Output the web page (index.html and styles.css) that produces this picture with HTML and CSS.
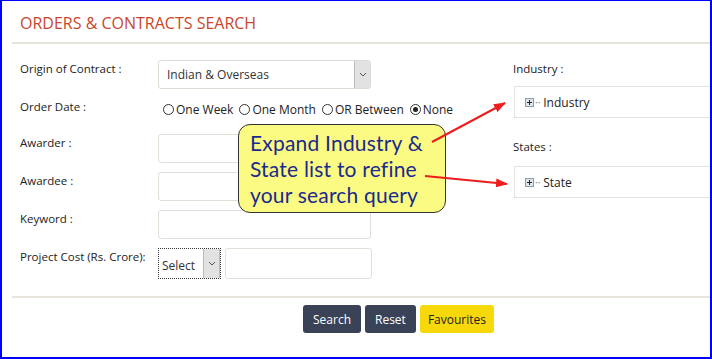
FILE: index.html
```html
<!DOCTYPE html>
<html lang="en">
<head>
  <meta charset="UTF-8">
  <title>Orders &amp; Contracts Search</title>
  <link rel="stylesheet" href="styles.css">
</head>
<body>

  <div class="frame">
    <h1 class="page-title">ORDERS &amp; CONTRACTS SEARCH</h1>

    <div class="search-body">
      <!-- left: form fields -->
      <div class="form-col">
        <div class="form-row">
          <label class="field-label">Origin of Contract :</label>
          <div class="select-box wide">
            <span>Indian &amp; Overseas</span>
            <span class="select-btn"><svg width="8" height="5" viewBox="0 0 8 5"><path d="M1 1l3 3 3-3" fill="none" stroke="#555" stroke-width="1"/></svg></span>
          </div>
        </div>
        <div class="form-row radio-row">
          <label class="field-label">Order Date :</label>
          <div class="radios">
            <span class="radio"><i class="dot"></i>One Week</span>
            <span class="radio"><i class="dot"></i>One Month</span>
            <span class="radio"><i class="dot"></i>OR Between</span>
            <span class="radio"><i class="dot on"></i>None</span>
          </div>
        </div>
        <div class="form-row">
          <label class="field-label">Awarder :</label>
          <div class="text-box wide"></div>
        </div>
        <div class="form-row">
          <label class="field-label">Awardee :</label>
          <div class="text-box wide"></div>
        </div>
        <div class="form-row">
          <label class="field-label">Keyword :</label>
          <div class="text-box wide"></div>
        </div>
        <div class="form-row cost-row">
          <label class="field-label">Project Cost (Rs. Crore):</label>
          <div class="select-box small">
            <span class="sel-text">Select</span>
            <span class="select-btn"><svg width="8" height="5" viewBox="0 0 8 5"><path d="M1 1l3 3 3-3" fill="none" stroke="#555" stroke-width="1"/></svg></span>
          </div>
          <div class="text-box cost"></div>
        </div>
      </div>

      <!-- right: tree pickers -->
      <div class="tree-col">
        <div class="tree-label">Industry :</div>
        <div class="tree-box">
          <span class="plus"></span><span class="dots">··</span>Industry
        </div>
        <div class="tree-label states">States :</div>
        <div class="tree-box">
          <span class="plus"></span><span class="dots">··</span>State
        </div>
      </div>
    </div>

    <div class="actions">
      <button class="btn dark">Search</button>
      <button class="btn dark">Reset</button>
      <button class="btn yellow">Favourites</button>
    </div>

    <!-- annotation callout -->
    <div class="callout">Expand Industry &amp;<br>State list to refine<br>your search query</div>
    <svg class="arrows" width="712" height="359" viewBox="0 0 712 359">
      <defs>
        <marker id="head" markerWidth="12" markerHeight="9" refX="11" refY="4.5" orient="auto" markerUnits="userSpaceOnUse">
          <path d="M0 0L12 4.5L0 9z" fill="#ee1c1c"/>
        </marker>
      </defs>
      <line x1="432" y1="142" x2="505" y2="103" stroke="#ee1c1c" stroke-width="2" marker-end="url(#head)"/>
      <line x1="425" y1="176" x2="507" y2="184" stroke="#ee1c1c" stroke-width="2" marker-end="url(#head)"/>
    </svg>
  </div>

</body>
</html>
```

FILE: styles.css
```css
body {
  margin: 0;
  font-family: 'Open Sans', sans-serif;
  background: #fff;
  color: #222;
}

.frame {
  position: relative;
  width: 712px;
  height: 359px;
  box-sizing: border-box;
  border: 2px solid #0000ff;
  border-top-width: 1px;
  overflow: hidden;
}

.page-title {
  margin: 0 0 0 10px;
  padding: 11px 0 8px 8px;
  font-size: 16px;
  font-weight: normal;
  color: #c8462c;
  border-bottom: 2px solid #e6e4da;
}

.search-body {
  display: flex;
  padding: 16px 0 0 18px;
}

.form-col {
  display: flex;
  flex-direction: column;
  gap: 9px;
  width: 493px;
}

.form-row {
  display: flex;
  align-items: flex-start;
}

.field-label {
  width: 138px;
  font-size: 11.5px;
  padding-top: 1px;
}

.radio-row {
  height: 27px;
}

.radios {
  display: flex;
  gap: 6px;
  font-size: 12px;
  padding-top: 3px;
  padding-left: 5px;
}

.radio {
  display: flex;
  align-items: center;
}

.dot {
  width: 11px;
  height: 11px;
  border: 1px solid #333;
  border-radius: 50%;
  margin-right: 2px;
  box-sizing: border-box;
  position: relative;
}

.dot.on::after {
  content: "";
  position: absolute;
  left: 2px;
  top: 2px;
  width: 5px;
  height: 5px;
  border-radius: 50%;
  background: #222;
}

.select-box {
  display: flex;
  align-items: center;
  justify-content: space-between;
  height: 29px;
  box-sizing: border-box;
  border: 1px solid #dcdcd4;
  border-radius: 3px;
  font-size: 12px;
  color: #333;
  padding-left: 8px;
}

.select-box.wide {
  width: 213px;
}

.select-btn {
  width: 15px;
  height: 27px;
  background: #e2e2e2;
  border-left: 1px solid #bbb;
  display: flex;
  align-items: center;
  justify-content: center;
}

.select-box.small {
  width: 63px;
  height: 31px;
  padding-left: 3px;
  border: 1px dotted #333;
  border-radius: 0;
}

.select-box.small .select-btn {
  height: 29px;
  border-right: 1px solid #bbb;
}

.sel-text {
  padding-top: 3px;
}

.text-box {
  height: 29px;
  box-sizing: border-box;
  border: 1px solid #e0dfd8;
  border-radius: 3px;
}

.text-box.wide {
  width: 213px;
}

.text-box.cost {
  width: 147px;
  height: 31px;
  margin-left: 4px;
}

.tree-col {
  flex: 1;
}

.tree-label {
  font-size: 11.5px;
  padding-top: 1px;
  height: 25px;
}

.tree-label.states {
  margin-top: 20px;
  height: 27px;
}

.tree-box {
  height: 32px;
  box-sizing: border-box;
  border: 1px solid #e2e2e2;
  border-right: none;
  margin-left: 1px;
  display: flex;
  align-items: center;
  padding-left: 10px;
  font-size: 12px;
}

.plus {
  width: 9px;
  height: 9px;
  box-sizing: border-box;
  border: 1px solid #8a9bb0;
  background: #dfe6ee;
  position: relative;
}

.plus::before,
.plus::after {
  content: "";
  position: absolute;
  background: #222;
}

.plus::before {
  left: 1px;
  top: 3px;
  width: 5px;
  height: 1px;
}

.plus::after {
  left: 3px;
  top: 1px;
  width: 1px;
  height: 5px;
}

.dots {
  color: #777;
  font-size: 10px;
  margin: 0 3px 0 1px;
}

.actions {
  margin: 17px 0 0 10px;
  border-top: 2px solid #e8e6dc;
  padding: 7px 0 0 291px;
  display: flex;
  gap: 4px;
}

.btn {
  height: 28px;
  border: none;
  border-radius: 3px;
  font-family: 'Open Sans', sans-serif;
  font-size: 12px;
  padding: 0 10px;
}

.btn.dark {
  background: #394257;
  color: #fff;
}

.btn.yellow {
  background: #f7d80a;
  color: #222;
  padding: 0 8px;
}

.callout {
  position: absolute;
  left: 236px;
  top: 123px;
  width: 208px;
  height: 89px;
  box-sizing: border-box;
  background: #fbfa82;
  border: 1.5px solid #333;
  border-radius: 12px;
  padding: 5px 0 0 11px;
  font-family: 'Lato', sans-serif;
  font-size: 21px;
  line-height: 26px;
  color: #1b2a8d;
  letter-spacing: 0.2px;
}

.arrows {
  position: absolute;
  left: -2px;
  top: -1px;
  pointer-events: none;
}
```
